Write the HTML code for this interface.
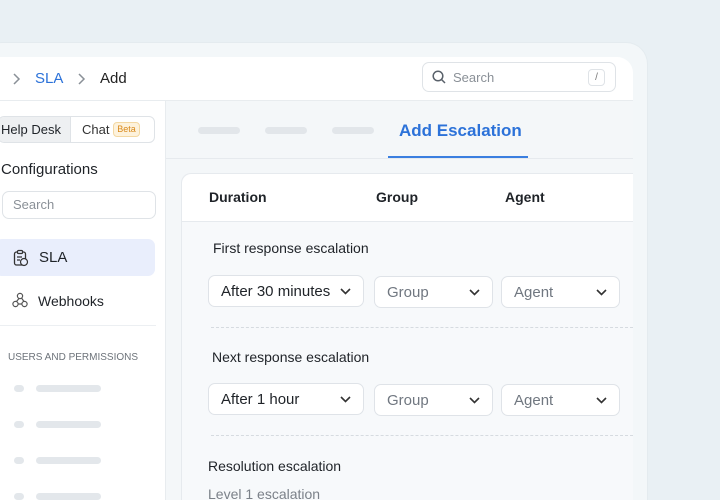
<!DOCTYPE html><html><head><style>
*{box-sizing:border-box;margin:0;padding:0}
html,body{width:720px;height:500px;overflow:hidden}
body{background:#e9f0f4;font-family:"Liberation Sans",sans-serif;position:relative;color:#1f2328}
.frame{position:absolute;left:-20px;top:42px;width:668px;height:458px;background:#f3f7f9;border-radius:22px 22px 0 0;border:1px solid #e4ebef;border-bottom:none}
.panel{position:absolute;left:-20px;top:57px;width:653px;height:443px;background:#fff;border-radius:16px 16px 0 0;overflow:hidden}
.a{position:absolute}
.hdr{left:0;top:57px;width:633px;height:44px;border-bottom:1px solid #e8ecef}
.side{left:0;top:101px;width:166px;height:399px;border-right:1px solid #e8ecef;background:#fff}
.content{left:166px;top:101px;width:467px;height:399px;background:#f4f7f9}
.card{left:181px;top:173px;width:452px;height:327px;background:#f7f9fb;border:1px solid #e6eaee;border-right:none;border-bottom:none;border-radius:10px 0 0 0}
.dd{position:absolute;height:32px;background:#fff;border:1px solid #dfe3e8;border-radius:7px;font-size:15px;padding:0 12px;line-height:31px}
.dd svg{position:absolute;right:12px;top:12px}
.g{color:#707780}
.bar{position:absolute;height:7px;border-radius:4px;background:#e3e7eb}
</style></head><body>
<div class="frame"></div>
<div class="panel"></div>
<div class="a hdr"></div>
<svg class="a" style="left:12px;top:73px" width="10" height="12"><path d="M2 1l5 5-5 5" stroke="#8a9097" stroke-width="1.5" fill="none"/></svg>
<div class="a" style="left:35px;top:70px;font-size:15px;color:#2c72d9">SLA</div>
<svg class="a" style="left:77px;top:73px" width="10" height="12"><path d="M2 1l5 5-5 5" stroke="#8a9097" stroke-width="1.5" fill="none"/></svg>
<div class="a" style="left:100px;top:70px;font-size:15px;color:#222">Add</div>
<div class="a" style="left:422px;top:62px;width:194px;height:30px;border:1px solid #dfe3e7;border-radius:7px"></div>
<svg class="a" style="left:432px;top:70px" width="14" height="14"><circle cx="6" cy="6" r="4.8" stroke="#59616a" stroke-width="1.5" fill="none"/><path d="M9.5 9.5l3.5 3.5" stroke="#59616a" stroke-width="1.5"/></svg>
<div class="a g" style="left:453px;top:70px;font-size:13px;color:#8a9097">Search</div>
<div class="a" style="left:588px;top:69px;width:17px;height:17px;border:1px solid #dfe3e7;border-radius:4px;font-size:10px;text-align:center;line-height:15px;color:#777">/</div>

<div class="a side"></div>
<div class="a" style="left:-2px;top:116px;width:157px;height:27px;border:1px solid #dfe3e7;border-radius:6px;overflow:hidden">
<div style="position:absolute;left:0;top:0;width:72px;height:27px;background:#eef0f2;border-right:1px solid #dfe3e7"></div>
<div style="position:absolute;left:2px;top:5px;font-size:13px">Help Desk</div>
<div style="position:absolute;left:83px;top:5px;font-size:13px;color:#333">Chat</div>
<div style="position:absolute;left:114px;top:5px;width:27px;height:15px;background:#fdf2dc;border:1px solid #f3d8a3;border-radius:4px;font-size:9px;color:#d98a1d;text-align:center;line-height:13px">Beta</div>
</div>
<div class="a" style="left:1px;top:161px;font-size:15px">Configurations</div>
<div class="a" style="left:2px;top:191px;width:154px;height:28px;border:1px solid #dfe3e7;border-radius:7px;font-size:13px;color:#8a9097;padding:5px 10px">Search</div>
<div class="a" style="left:-5px;top:239px;width:160px;height:37px;background:#e9eefc;border-radius:7px"></div>
<svg class="a" style="left:13px;top:249px" width="16" height="18"><rect x="1.5" y="3" width="11" height="13" rx="2" stroke="#333" stroke-width="1.3" fill="none"/><rect x="4.5" y="1.5" width="5" height="3" rx="1" stroke="#333" stroke-width="1.2" fill="#e9eefc"/><circle cx="11" cy="13" r="3.5" stroke="#333" stroke-width="1.2" fill="#e9eefc"/><path d="M4 8h5M4 11h3" stroke="#333" stroke-width="1.2"/></svg>
<div class="a" style="left:39px;top:249px;font-size:15px">SLA</div>
<svg class="a" style="left:12px;top:292px" width="16" height="16"><circle cx="8" cy="4" r="2.6" stroke="#555" stroke-width="1.2" fill="none"/><circle cx="3.5" cy="12" r="2.6" stroke="#555" stroke-width="1.2" fill="none"/><circle cx="12.5" cy="12" r="2.6" stroke="#555" stroke-width="1.2" fill="none"/><path d="M7 6.5L4.5 9.5M9.5 6l2.5 3.5M6 12h4" stroke="#555" stroke-width="1.2"/></svg>
<div class="a" style="left:38px;top:293px;font-size:14px">Webhooks</div>
<div class="a" style="left:0;top:325px;width:156px;height:1px;background:#eceff2"></div>
<div class="a" style="left:8px;top:352px;font-size:10px;color:#6d737a">USERS AND PERMISSIONS</div>
<div class="bar" style="left:14px;top:385px;width:10px"></div><div class="bar" style="left:36px;top:385px;width:65px"></div>
<div class="bar" style="left:14px;top:421px;width:10px"></div><div class="bar" style="left:36px;top:421px;width:65px"></div>
<div class="bar" style="left:14px;top:457px;width:10px"></div><div class="bar" style="left:36px;top:457px;width:65px"></div>
<div class="bar" style="left:14px;top:493px;width:10px"></div><div class="bar" style="left:36px;top:493px;width:65px"></div>

<div class="a content"></div>
<div class="a" style="left:166px;top:158px;width:467px;height:1px;background:#e6eaee"></div>
<div class="bar" style="left:198px;top:127px;width:42px;background:#e2e6ea"></div>
<div class="bar" style="left:265px;top:127px;width:42px;background:#e2e6ea"></div>
<div class="bar" style="left:332px;top:127px;width:42px;background:#e2e6ea"></div>
<div class="a" style="left:399px;top:121px;font-size:17px;font-weight:bold;color:#2c72d9">Add Escalation</div>
<div class="a" style="left:388px;top:156px;width:140px;height:2px;background:#3a7fe0"></div>

<div class="a card"></div>
<div class="a" style="left:182px;top:174px;width:451px;height:48px;background:#fff;border-bottom:1px solid #e6eaee;border-radius:10px 0 0 0"></div>
<div class="a" style="left:209px;top:189px;font-size:14px;font-weight:bold">Duration</div>
<div class="a" style="left:376px;top:189px;font-size:14px;font-weight:bold">Group</div>
<div class="a" style="left:505px;top:189px;font-size:14px;font-weight:bold">Agent</div>

<div class="a" style="left:213px;top:240px;font-size:14px">First response escalation</div>
<div class="dd" style="left:208px;top:275px;width:156px">After 30 minutes<svg width="11" height="7"><path d="M1 1l4.5 4.5L10 1" stroke="#333" stroke-width="1.6" fill="none"/></svg></div>
<div class="dd g" style="left:374px;top:276px;width:119px">Group<svg width="11" height="7"><path d="M1 1l4.5 4.5L10 1" stroke="#333" stroke-width="1.6" fill="none"/></svg></div>
<div class="dd g" style="left:501px;top:276px;width:119px">Agent<svg width="11" height="7"><path d="M1 1l4.5 4.5L10 1" stroke="#333" stroke-width="1.6" fill="none"/></svg></div>
<div class="a" style="left:211px;top:327px;width:422px;border-top:1px dashed #d6dbe0"></div>

<div class="a" style="left:212px;top:349px;font-size:14px">Next response escalation</div>
<div class="dd" style="left:208px;top:383px;width:156px">After 1 hour<svg width="11" height="7"><path d="M1 1l4.5 4.5L10 1" stroke="#333" stroke-width="1.6" fill="none"/></svg></div>
<div class="dd g" style="left:374px;top:384px;width:119px">Group<svg width="11" height="7"><path d="M1 1l4.5 4.5L10 1" stroke="#333" stroke-width="1.6" fill="none"/></svg></div>
<div class="dd g" style="left:501px;top:384px;width:119px">Agent<svg width="11" height="7"><path d="M1 1l4.5 4.5L10 1" stroke="#333" stroke-width="1.6" fill="none"/></svg></div>
<div class="a" style="left:211px;top:435px;width:422px;border-top:1px dashed #d6dbe0"></div>

<div class="a" style="left:208px;top:458px;font-size:14px">Resolution escalation</div>
<div class="a" style="left:208px;top:486px;font-size:14px;color:#7b8189">Level 1 escalation</div>
</body></html>
